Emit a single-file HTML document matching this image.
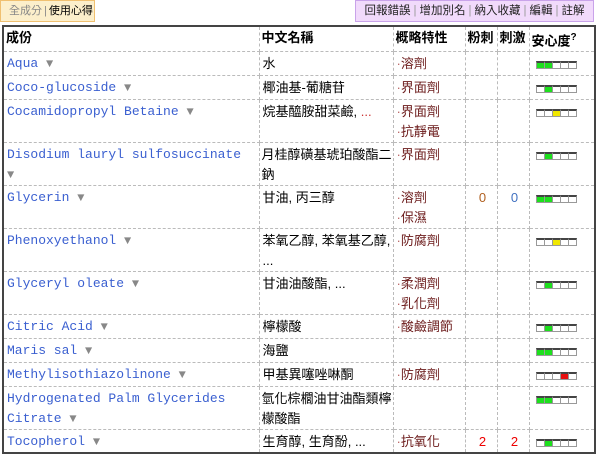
<!DOCTYPE html>
<html><head><meta charset="utf-8"><style>
body{margin:0;width:600px;height:457px;background:#fff;font-family:"Liberation Sans","Noto Sans CJK TC",sans-serif;font-size:13px;position:relative;overflow:hidden}
.tl{position:absolute;left:0;top:0;width:93px;height:20px;background:#fcefcb;border:1px solid #f0c070;line-height:20px;font-size:11px;white-space:nowrap;overflow:hidden}
.tl span{color:#888;margin-left:8px}
.tr{position:absolute;left:355px;top:0;width:237px;height:20px;background:#f1dafb;border:1px solid #c9a3ea;line-height:20px;font-size:11.5px;text-align:center;color:#222;white-space:nowrap}
.sep{color:#999;margin:0 3px}
.tl .sep{margin:0 2px}
table{position:absolute;left:2px;top:25px;width:594px;border-collapse:collapse;table-layout:fixed;border:2px solid #444}
td{border:1px dashed #bbb;vertical-align:top;padding:2px 0 0 3px;line-height:20px;overflow:hidden}
tr.h td{font-weight:bold;font-size:13px;color:#000;padding:1px 0 0 2px;white-space:nowrap}
.en{font-family:"Liberation Mono",monospace;font-size:13px;color:#3a5fd0}
.ar{color:#888;font-size:12px}
.f{color:#6b1a1a}
.f:before{content:"·";color:#b66}
.n{text-align:center;color:#c06000}
.b{display:flex;margin-top:7px;margin-left:3px}
.b i{display:block;width:7px;height:5px;border:1px solid #999;border-top:2px solid #444;margin-right:-1px;background:#fff}
.b i.g{background:#1de01d}.b i.y{background:#f0e800}.b i.r{background:#e81010}
</style></head><body>
<div class="tl"><span>全成分</span><span class="sep">|</span>使用心得</div>
<div class="tr">回報錯誤<span class="sep">|</span>增加別名<span class="sep">|</span>納入收藏<span class="sep">|</span>編輯<span class="sep">|</span>註解</div>
<table>
<colgroup><col style="width:256px"><col style="width:134px"><col style="width:72px"><col style="width:32px"><col style="width:32px"><col></colgroup>
<tr class="h" style="height:24px"><td>成份</td><td>中文名稱</td><td>概略特性</td><td>粉刺</td><td>刺激</td><td>安心度<sup style="font-size:10px">?</sup></td></tr>
<tr style="height:24px"><td class="en">Aqua <span class="ar">▼</span></td><td>水</td><td><span class="f">溶劑</span></td><td></td><td></td><td><div class="b"><i class="g"></i><i class="g"></i><i></i><i></i><i></i></div></td></tr>
<tr style="height:24px"><td class="en">Coco-glucoside <span class="ar">▼</span></td><td>椰油基-葡糖苷</td><td><span class="f">界面劑</span></td><td></td><td></td><td><div class="b"><i></i><i class="g"></i><i></i><i></i><i></i></div></td></tr>
<tr style="height:43px"><td class="en">Cocamidopropyl Betaine <span class="ar">▼</span></td><td>烷基醯胺甜菜鹼, <span style="color:#c33">...</span></td><td><span class="f">界面劑</span><br><span class="f">抗靜電</span></td><td></td><td></td><td><div class="b"><i></i><i></i><i class="y"></i><i></i><i></i></div></td></tr>
<tr style="height:43px"><td class="en">Disodium lauryl sulfosuccinate<br><span class="ar">▼</span></td><td style="padding-left:2px">月桂醇磺基琥珀酸酯二鈉</td><td><span class="f">界面劑</span></td><td></td><td></td><td><div class="b"><i></i><i class="g"></i><i></i><i></i><i></i></div></td></tr>
<tr style="height:43px"><td class="en">Glycerin <span class="ar">▼</span></td><td>甘油, 丙三醇</td><td><span class="f">溶劑</span><br><span class="f">保濕</span></td><td class="n" style="color:#b06020">0</td><td class="n" style="color:#4070c0">0</td><td><div class="b"><i class="g"></i><i class="g"></i><i></i><i></i><i></i></div></td></tr>
<tr style="height:43px"><td class="en">Phenoxyethanol <span class="ar">▼</span></td><td>苯氧乙醇, 苯氧基乙醇, ...</td><td><span class="f">防腐劑</span></td><td></td><td></td><td><div class="b"><i></i><i></i><i class="y"></i><i></i><i></i></div></td></tr>
<tr style="height:43px"><td class="en">Glyceryl oleate <span class="ar">▼</span></td><td>甘油油酸酯, ...</td><td><span class="f">柔潤劑</span><br><span class="f">乳化劑</span></td><td></td><td></td><td><div class="b"><i></i><i class="g"></i><i></i><i></i><i></i></div></td></tr>
<tr style="height:24px"><td class="en">Citric Acid <span class="ar">▼</span></td><td>檸檬酸</td><td><span class="f">酸鹼調節</span></td><td></td><td></td><td><div class="b"><i></i><i class="g"></i><i></i><i></i><i></i></div></td></tr>
<tr style="height:24px"><td class="en">Maris sal <span class="ar">▼</span></td><td>海鹽</td><td></td><td></td><td></td><td><div class="b"><i class="g"></i><i class="g"></i><i></i><i></i><i></i></div></td></tr>
<tr style="height:24px"><td class="en">Methylisothiazolinone <span class="ar">▼</span></td><td>甲基異噻唑啉酮</td><td><span class="f">防腐劑</span></td><td></td><td></td><td><div class="b"><i></i><i></i><i></i><i class="r"></i><i></i></div></td></tr>
<tr style="height:43px"><td class="en">Hydrogenated Palm Glycerides Citrate <span class="ar">▼</span></td><td style="padding-left:2px">氫化棕櫚油甘油酯類檸檬酸酯</td><td></td><td></td><td></td><td><div class="b"><i class="g"></i><i class="g"></i><i></i><i></i><i></i></div></td></tr>
<tr style="height:23px"><td class="en">Tocopherol <span class="ar">▼</span></td><td>生育醇, 生育酚, ...</td><td><span class="f">抗氧化</span></td><td class="n" style="color:#e00">2</td><td class="n" style="color:#e00">2</td><td><div class="b"><i></i><i class="g"></i><i></i><i></i><i></i></div></td></tr>
</table>
</body></html>
